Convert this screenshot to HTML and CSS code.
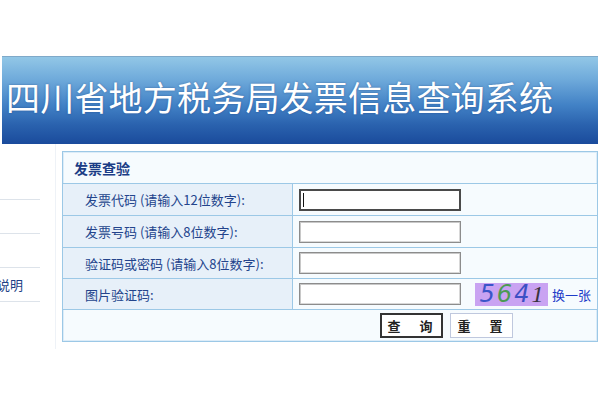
FILE: index.html
```html
<!DOCTYPE html>
<html lang="zh-CN">
<head>
<meta charset="utf-8">
<title>四川省地方税务局发票信息查询系统</title>
<link rel="stylesheet" href="styles.css">
</head>
<body>
<div class="page">
  <div class="top-gap"></div>
  <header class="banner">
    <h1 class="title">四川省地方税务局发票信息查询系统</h1>
  </header>
  <div class="main">
    <nav class="sidebar">
      <div class="side-item"></div>
      <div class="side-item"></div>
      <div class="side-item"></div>
      <div class="side-item"><span class="side-text">说明</span></div>
    </nav>
    <section class="panel">
      <div class="panel-head">发票查验</div>
      <div class="row">
        <div class="label">发票代码 (请输入12位数字):</div>
        <div class="cell"><span class="field-wrap focused"><input class="field field-focus" type="text"></span></div>
      </div>
      <div class="row">
        <div class="label">发票号码 (请输入8位数字):</div>
        <div class="cell"><input class="field" type="text"></div>
      </div>
      <div class="row row-short">
        <div class="label">验证码或密码 (请输入8位数字):</div>
        <div class="cell"><input class="field" type="text"></div>
      </div>
      <div class="row row-short">
        <div class="label">图片验证码:</div>
        <div class="cell">
          <input class="field" type="text">
          <span class="captcha"><span class="d1">5</span><span class="d2">6</span><span class="d3">4</span><span class="d4">1</span></span>
          <a class="refresh">换一张</a>
        </div>
      </div>
      <div class="btn-row">
        <button class="btn btn-primary" type="button">查　询</button>
        <button class="btn" type="button">重　置</button>
      </div>
    </section>
  </div>
</div>
</body>
</html>
```
FILE: styles.css
```css
html, body {
  margin: 0;
  padding: 0;
  background: #ffffff;
}
body {
  font-family: "Noto Sans CJK SC", "Noto Sans", sans-serif;
  width: 600px;
  height: 400px;
  overflow: hidden;
}
.top-gap {
  height: 56px;
}
.banner {
  height: 88px;
  margin: 0 2px 0 2px;
  box-sizing: border-box;
  border-top: 1px solid #7fa9c9;
  background: linear-gradient(to bottom, #92c7e6 0%, #70abdb 25%, #4282c6 55%, #2a62ae 78%, #1a4b9c 100%);
  display: flex;
  align-items: center;
}
.title {
  margin: -7px 0 0 4px;
  font-family: "Noto Sans CJK SC", sans-serif;
  font-weight: 400;
  font-size: 34px;
  line-height: 40px;
  color: #ffffff;
  letter-spacing: 0.2px;
  text-shadow: 0 0 2px rgba(20, 50, 110, 0.5);
  white-space: nowrap;
}
.main {
  display: flex;
  align-items: flex-start;
}
.sidebar {
  width: 56px;
  height: 205px;
  padding-top: 22px;
  border-right: 1px solid #eef2f7;
  box-sizing: border-box;
  overflow: hidden;
}
.side-item {
  width: 40px;
  height: 33px;
  border-bottom: 1px solid #dde3ea;
  display: flex;
  align-items: center;
  white-space: nowrap;
}
.side-text {
  margin-left: -3px;
  font-size: 13px;
  color: #1d3f86;
}
.panel {
  margin: 7px 0 0 6px;
  width: 536px;
  border: 1px solid #9cc8e6;
  box-shadow: inset 0 0 0 1px #dcecf8;
  background: #f6fbfe;
  box-sizing: border-box;
}
.panel-head {
  height: 31px;
  border-bottom: 1px solid #9cc8e6;
  padding-left: 11px;
  display: flex;
  align-items: center;
  font-size: 14px;
  font-weight: 700;
  color: #1b3d86;
}
.row {
  display: flex;
  height: 32px;
  border-bottom: 1px solid #9cc8e6;
  box-sizing: border-box;
}
.row-short {
  height: 31px;
}
.label {
  width: 230px;
  box-sizing: border-box;
  padding-left: 22px;
  border-right: 1px solid #9cc8e6;
  background: #e7f0f9;
  display: flex;
  align-items: center;
  font-size: 13px;
  color: #23448c;
  white-space: nowrap;
}
.cell {
  flex: 1;
  display: flex;
  align-items: center;
  padding-left: 6px;
  background: #f6fbfe;
}
.field-wrap {
  position: relative;
  display: inline-flex;
}
.field-wrap.focused::after {
  content: "";
  position: absolute;
  left: 4px;
  top: 4px;
  width: 1px;
  height: 14px;
  background: #111;
}
.field {
  width: 162px;
  height: 22px;
  box-sizing: border-box;
  margin: 0;
  padding: 0;
  border: 1px solid #8c8c8c;
  box-shadow: inset 1px 1px 0 #c8c8c8, inset -1px -1px 0 #d8d8d8;
  background: #ffffff;
  outline: none;
}
.field-focus {
  border: 2px solid #4a4a4a;
  box-shadow: none;
}
.captcha {
  margin-left: 14px;
  width: 73px;
  height: 23px;
  background: #c9a3f2;
  display: inline-flex;
  align-items: center;
  justify-content: center;
  font-family: "DejaVu Sans", sans-serif;
  font-style: italic;
  font-size: 24px;
  line-height: 23px;
  letter-spacing: 2px;
}
.d1 { color: #3b55c9; }
.d2 { color: #4b9a52; }
.d3 { color: #3b4fc4; }
.d4 { color: #3a3440; font-family: "Liberation Serif", serif; letter-spacing: 0; }
.refresh {
  margin-left: 4px;
  font-size: 13px;
  color: #1d3cc8;
  white-space: nowrap;
}
.btn-row {
  height: 31px;
  display: flex;
  align-items: center;
  gap: 7px;
  padding-left: 317px;
}
.btn {
  width: 63px;
  height: 25px;
  box-sizing: border-box;
  margin: 0;
  padding: 0;
  background: #ffffff;
  border: 1px solid #bfc8de;
  font-family: "Noto Sans CJK SC", sans-serif;
  font-size: 13px;
  font-weight: 700;
  color: #222;
  letter-spacing: 3px;
}
.btn-primary {
  border: 2px solid #333;
}
```
